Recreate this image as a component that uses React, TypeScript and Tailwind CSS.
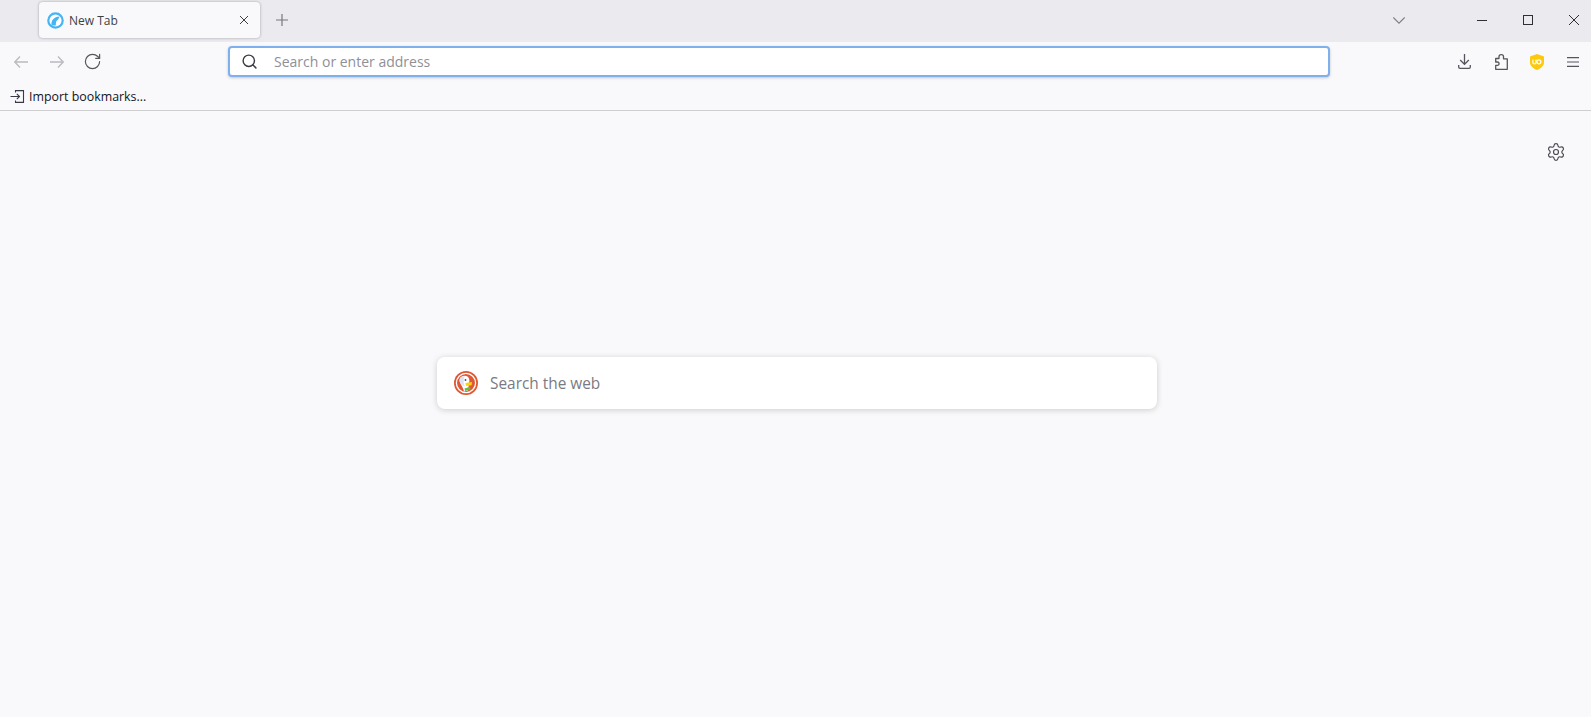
import { RotateCw, Search, Settings } from "lucide-react";

const FirefoxIcon = () => (
  <svg width="17" height="17" viewBox="0 0 17 17">
    <circle cx="8.5" cy="8.5" r="7.2" fill="#fff" stroke="#45b4f5" strokeWidth="2.2" />
    <path d="M4.5 13.5 C4 8.5 6.5 4.6 12.8 4.4 C11.6 5.6 11.8 7 10.6 8 C9.2 8.6 8.8 10.5 8.8 13.5 Z" fill="#45b4f5" />
  </svg>
);

const DuckIcon = () => (
  <svg width="24" height="24" viewBox="0 0 24 24">
    <circle cx="12" cy="12" r="12" fill="#de5833" />
    <circle cx="12" cy="12" r="9.6" fill="none" stroke="#fff" strokeWidth="1.3" />
    <path d="M5.5 9 C6 5 11 4 13.5 5.5 C15.5 7 15.8 10 15 12 L14 19.5 L10 20.5 C9 15 5.5 13 5.5 9 Z" fill="#fff" />
    <path d="M5.5 9 C6 5.5 9 5 11 5.2 C9 7 9.5 12 11 16 C8 14 5.5 12 5.5 9 Z" fill="#dde3f2" />
    <circle cx="11.5" cy="9" r="0.9" fill="#2d4f8e" />
    <path d="M11.5 12 L18 11 L17.6 14.2 L12 15 Z" fill="#fdd20a" />
    <path d="M10.5 17.6 L16 15.8 L16.5 18.4 L11 20 Z" fill="#65bc46" />
  </svg>
);

const UblockIcon = () => (
  <svg width="14" height="16" viewBox="0 0 14 16">
    <path d="M7 0 L14 2.4 V8.5 C14 12 10.5 14.6 7 16 C3.5 14.6 0 12 0 8.5 V2.4 Z" fill="#fdc90d" />
    <path d="M2.9 5.6 V8.8 C2.9 10.3 6 10.3 6 8.8 V5.6" fill="none" stroke="#fff" strokeWidth="1.2" />
    <circle cx="8.9" cy="7.8" r="2" fill="none" stroke="#fff" strokeWidth="1.2" />
  </svg>
);

const ImportIcon = () => (
  <svg width="15" height="13" viewBox="0 0 15 13" fill="none" stroke="#3a3a44" strokeWidth="1.1">
    <path d="M5.5 2.5 V0.6 H13.5 V12.4 H5.5 V10.5" />
    <path d="M0.5 6.5 H9.5 M6.8 3.8 L9.5 6.5 L6.8 9.2" />
  </svg>
);

const ArrowIcon = ({ flip = false }: { flip?: boolean }) => (
  <svg width="14" height="12" viewBox="0 0 14 12" fill="none" stroke="#bbbbc0" strokeWidth="1.4" className={flip ? "-scale-x-100" : ""}>
    <path d="M0.8 6 H14 M6 0.6 L0.8 6 L6 11.4" />
  </svg>
);

const CloseIcon = ({ size, color }: { size: number; color: string }) => (
  <svg width={size} height={size} viewBox="0 0 10 10" fill="none" stroke={color} strokeWidth={10 / size}>
    <path d="M0 0 L10 10 M10 0 L0 10" />
  </svg>
);

const PlusIcon = () => (
  <svg width="12" height="12" viewBox="0 0 12 12" fill="none" stroke="#77777e" strokeWidth="1.2">
    <path d="M6 0 V12 M0 6 H12" />
  </svg>
);

const ChevronIcon = () => (
  <svg width="12" height="7" viewBox="0 0 12 7" fill="none" stroke="#7f7f86" strokeWidth="1.1">
    <path d="M0.3 0.4 L6 6.2 L11.7 0.4" />
  </svg>
);

const DownloadIcon = () => (
  <svg width="13" height="15" viewBox="0 0 13 15" fill="none" stroke="#55555c" strokeWidth="1.3">
    <path d="M6.5 0 V10.4 M2.2 6 L6.5 10.4 L10.8 6" />
    <path d="M0.7 11 V13 C0.7 13.8 1.2 14.3 2 14.3 H11 C11.8 14.3 12.3 13.8 12.3 13 V11" />
  </svg>
);

const PuzzleIcon = () => (
  <svg width="13" height="16" viewBox="0 0 13 16" fill="none" stroke="#55555c" strokeWidth="1.3" strokeLinejoin="round">
    <path d="M0.7 4.5 H4 V2.6 C4 0 8.5 0 8.5 2.6 V4.8 H12.3 V15.3 H0.7 V11.4 H2.4 C4.6 11.4 4.6 8 2.4 8 H0.7 Z" />
  </svg>
);

const MenuIcon = () => (
  <svg width="12" height="10" viewBox="0 0 12 10" fill="none" stroke="#55555c" strokeWidth="1.2">
    <path d="M0 0.6 H12 M0 5 H12 M0 9.4 H12" />
  </svg>
);

export default function App() {
  return (
    <div className="flex h-[717px] w-[1591px] flex-col overflow-hidden bg-[#f9f9fb] font-['Open_Sans','Noto_Sans',sans-serif]">
      {/* tab strip */}
      <div className="flex h-[42px] items-center bg-[#eaeaef] pb-[2px] pl-[39px]">
        <div className="flex h-[36px] w-[221px] items-center rounded-[4px] bg-[#f9f9fb] pl-2 pr-3 shadow-[0_0_3px_rgba(0,0,0,0.3)]">
          <FirefoxIcon />
          <span className="ml-[5px] mt-[2px] text-[12px] text-[#3f3f46]">New Tab</span>
          <span className="ml-auto">
            <CloseIcon size={8} color="#3f3f46" />
          </span>
        </div>
        <span className="ml-4">
          <PlusIcon />
        </span>
        <span className="ml-[1105px]">
          <ChevronIcon />
        </span>
        <div className="ml-[72px] h-px w-[10px] bg-[#2f2f36]" />
        <div className="ml-9 h-[10px] w-[10px] border border-[#2f2f36]" />
        <span className="ml-9">
          <CloseIcon size={10} color="#2f2f36" />
        </span>
      </div>

      {/* nav bar */}
      <div className="flex h-[39px] items-center pl-[14px]">
        <ArrowIcon />
        <span className="ml-[22px]">
          <ArrowIcon flip />
        </span>
        <RotateCw className="ml-[19px] h-[19px] w-[19px] text-[#55555c]" strokeWidth={1.5} />
        <div className="ml-[126px] flex h-[31px] w-[1102px] items-center rounded-[4px] border-2 border-[#7eb0ee] bg-white pl-[11px] shadow-[0_1px_3px_rgba(0,0,0,0.2)]">
          <Search className="h-[17px] w-[17px] text-[#3a3a44]" strokeWidth={2} />
          <span className="ml-4 text-[14px] text-[#8f8f96]">Search or enter address</span>
        </div>
        <span className="ml-[128px]">
          <DownloadIcon />
        </span>
        <span className="ml-6">
          <PuzzleIcon />
        </span>
        <span className="ml-[22px]">
          <UblockIcon />
        </span>
        <span className="ml-[23px]">
          <MenuIcon />
        </span>
      </div>

      {/* bookmarks */}
      <div className="flex h-[30px] items-center border-b border-[#cfcfd2] pl-[10px] pt-[2px]">
        <ImportIcon />
        <span className="ml-[4px] mt-[2px] text-[12.4px] text-[#15141a]">Import bookmarks...</span>
      </div>

      {/* new tab page */}
      <div className="flex flex-1 flex-col">
        <div className="flex justify-end pr-[25px] pt-[31px]">
          <Settings className="h-5 w-5 text-[#4a4a52]" strokeWidth={1.4} />
        </div>
        <div className="ml-[437px] mt-[195px] flex h-[52px] w-[720px] items-center rounded-[8px] bg-white pl-[17px] shadow-[0_1px_6px_rgba(0,0,0,0.18)]">
          <DuckIcon />
          <span className="ml-[12px] mt-[2px] text-[15.4px] text-[#7a7a82]">Search the web</span>
        </div>
      </div>
    </div>
  );
}
